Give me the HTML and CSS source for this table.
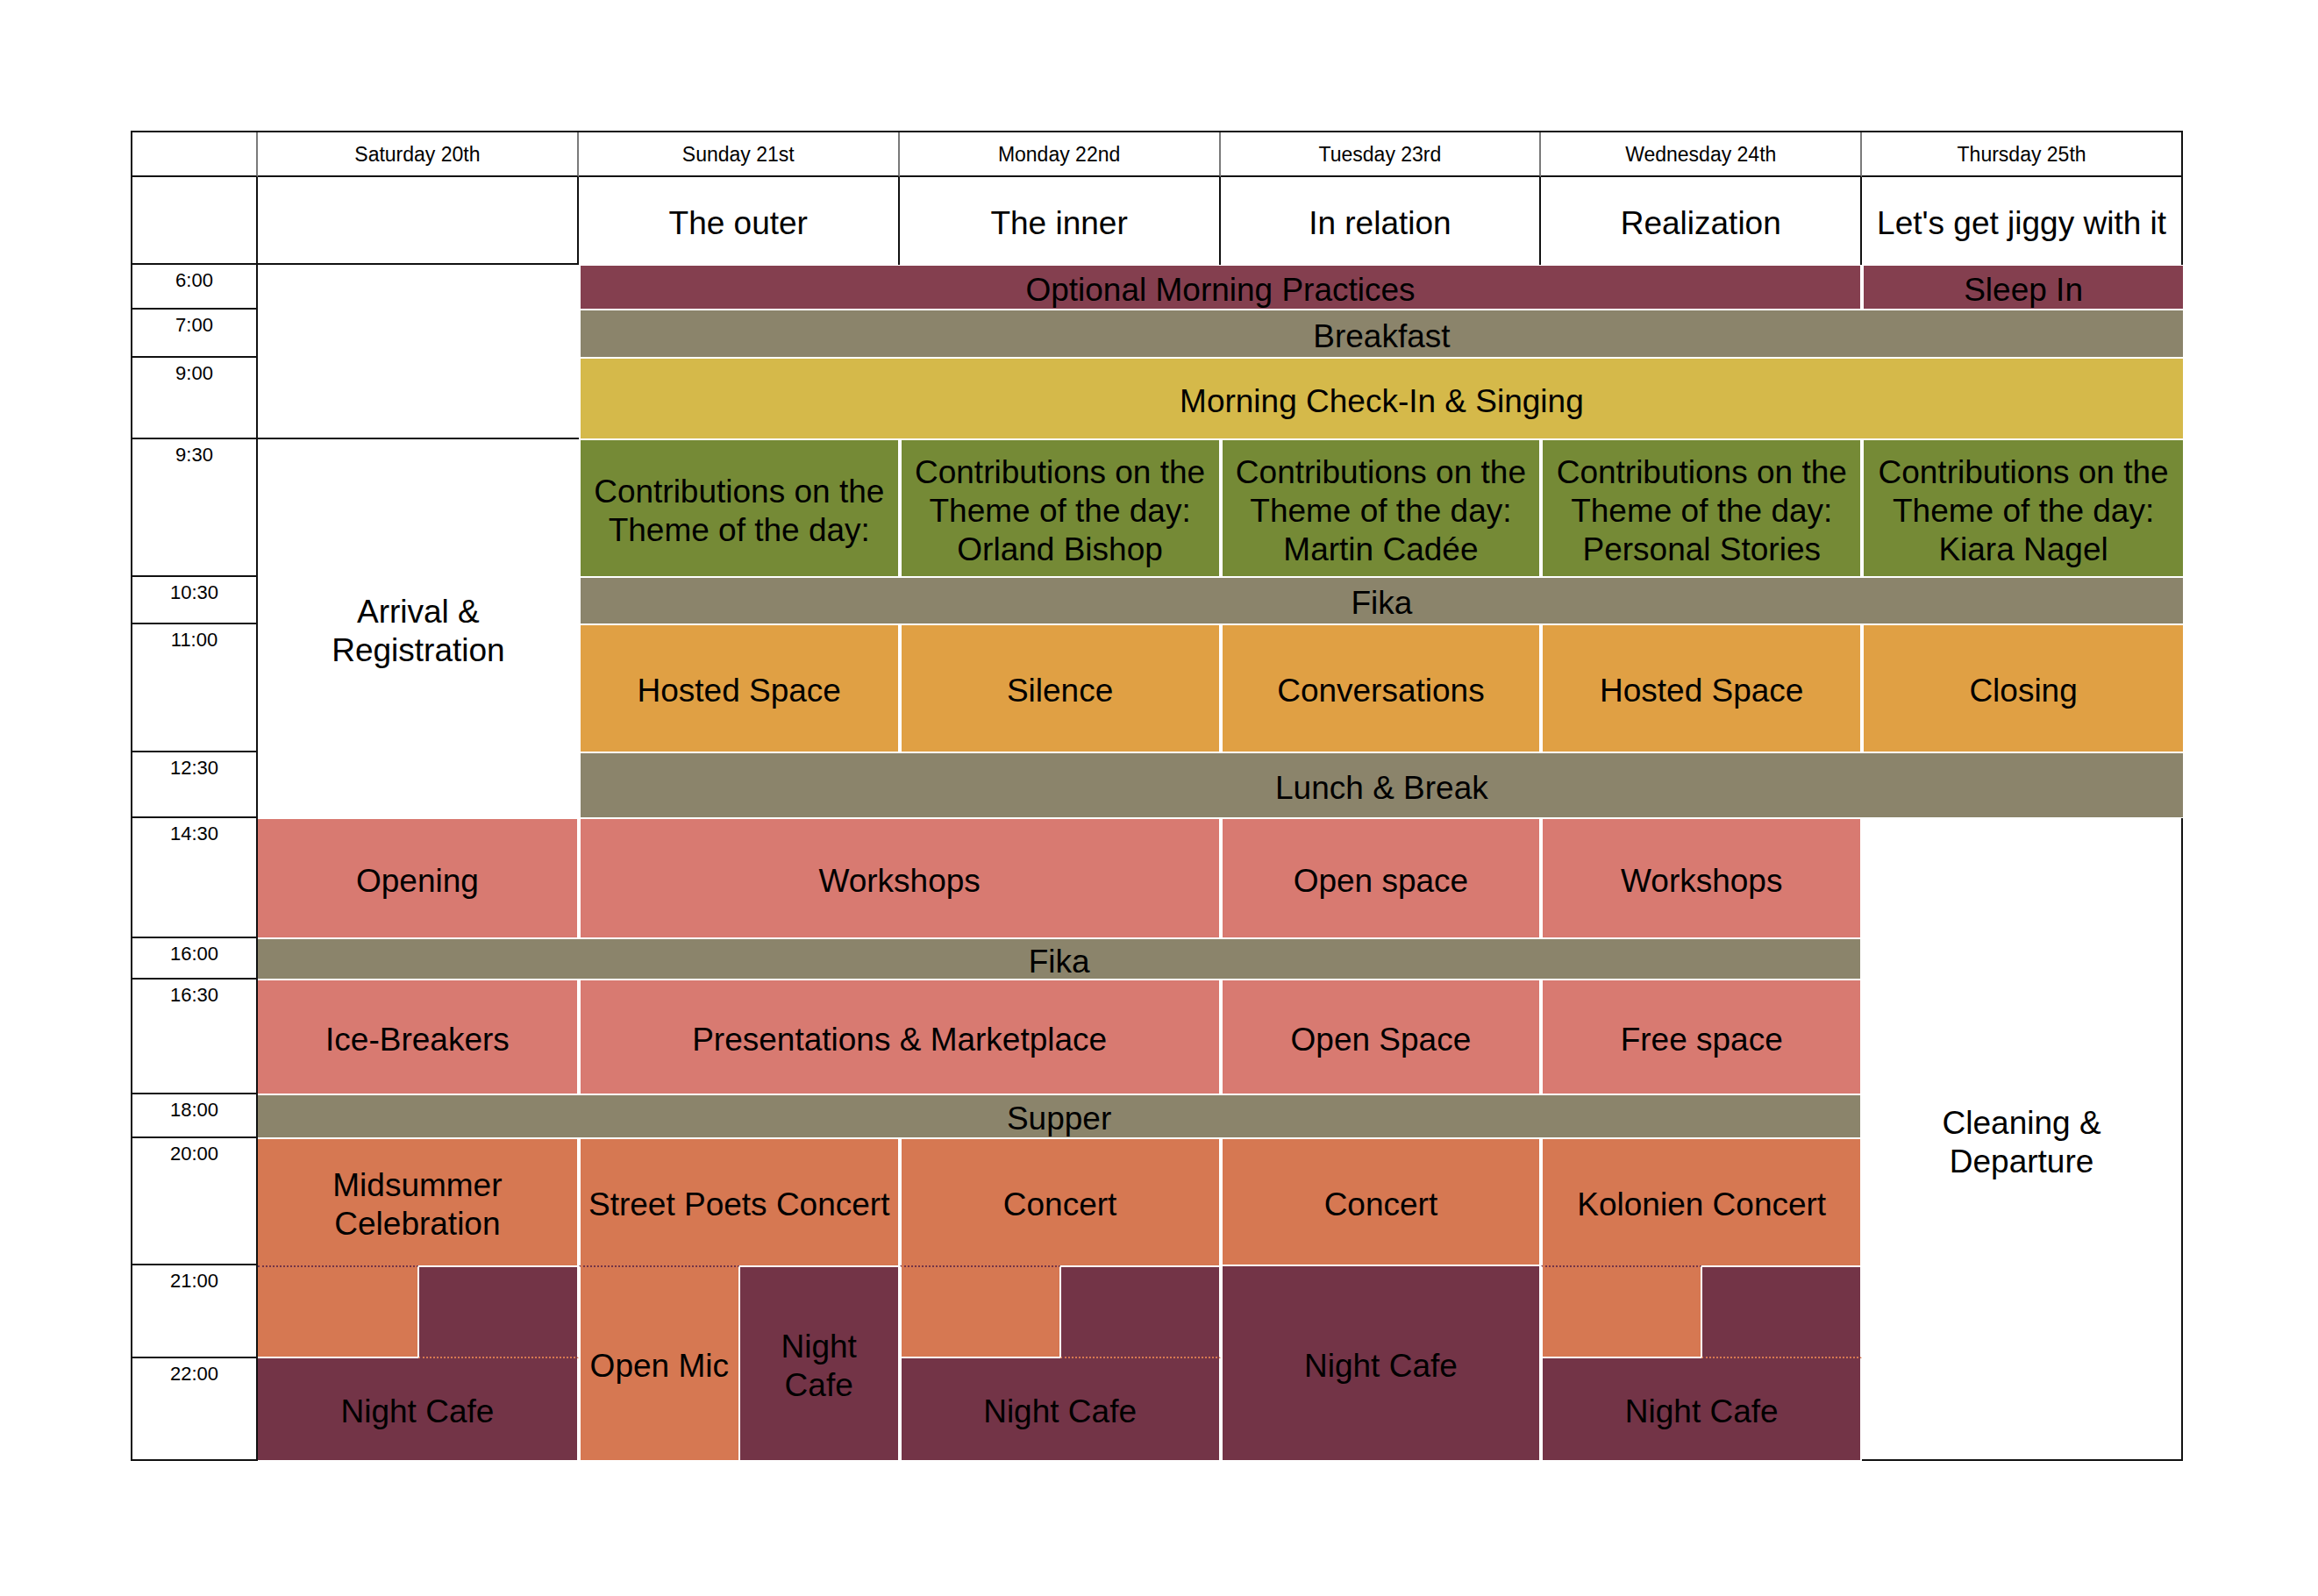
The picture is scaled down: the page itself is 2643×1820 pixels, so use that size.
FILE: index.html
```html
<!DOCTYPE html>
<html lang="en">
<head>
<meta charset="utf-8">
<title>Schedule</title>
<link rel="stylesheet" href="styles.css">
</head>
<body>
<div class="sched">
  <!-- header row: days -->
  <div class="hd-corner col-time t-day"></div>
  <div class="hd-day d-sat t-day">Saturday 20th</div>
  <div class="hd-day d-sun t-day">Sunday 21st</div>
  <div class="hd-day d-mon t-day">Monday 22nd</div>
  <div class="hd-day d-tue t-day">Tuesday 23rd</div>
  <div class="hd-day d-wed t-day">Wednesday 24th</div>
  <div class="hd-day hd-last d-thu t-day">Thursday 25th</div>

  <!-- header row: themes -->
  <div class="hd-corner2 col-time t-theme"></div>
  <div class="theme theme-sat d-sat t-theme"></div>
  <div class="theme d-sun t-theme">The outer</div>
  <div class="theme d-mon t-theme">The inner</div>
  <div class="theme d-tue t-theme">In relation</div>
  <div class="theme d-wed t-theme">Realization</div>
  <div class="theme d-thu t-theme">Let's get jiggy with it</div>

  <!-- time column -->
  <div class="time col-time t-0600">6:00</div>
  <div class="time col-time t-0700">7:00</div>
  <div class="time col-time t-0900">9:00</div>
  <div class="time col-time t-0930">9:30</div>
  <div class="time col-time t-1030">10:30</div>
  <div class="time col-time t-1100">11:00</div>
  <div class="time col-time t-1230">12:30</div>
  <div class="time col-time t-1430">14:30</div>
  <div class="time col-time t-1600">16:00</div>
  <div class="time col-time t-1630">16:30</div>
  <div class="time col-time t-1800">18:00</div>
  <div class="time col-time t-2000">20:00</div>
  <div class="time col-time t-2100">21:00</div>
  <div class="time col-time t-2200">22:00</div>

  <!-- Saturday white cells -->
  <div class="blank d-sat t-0600-0900"></div>
  <div class="plain d-sat t-0930-1230">Arrival &amp;<br>Registration</div>

  <!-- morning -->
  <div class="b c-morning d-sun-wed t-0600">Optional Morning Practices</div>
  <div class="b r0 c-morning d-thu t-0600">Sleep In</div>
  <div class="b r0 c-meal d-sun-thu t-0700">Breakfast</div>
  <div class="b r0 c-checkin d-sun-thu t-0900">Morning Check-In &amp; Singing</div>

  <div class="b c-contrib d-sun t-0930">Contributions on the<br>Theme of the day:</div>
  <div class="b c-contrib d-mon t-0930">Contributions on the<br>Theme of the day:<br>Orland Bishop</div>
  <div class="b c-contrib d-tue t-0930">Contributions on the<br>Theme of the day:<br>Martin Cadée</div>
  <div class="b c-contrib d-wed t-0930">Contributions on the<br>Theme of the day:<br>Personal Stories</div>
  <div class="b r0 c-contrib d-thu t-0930">Contributions on the<br>Theme of the day:<br>Kiara Nagel</div>

  <div class="b r0 c-meal d-sun-thu t-1030">Fika</div>

  <div class="b c-amber d-sun t-1100">Hosted Space</div>
  <div class="b c-amber d-mon t-1100">Silence</div>
  <div class="b c-amber d-tue t-1100">Conversations</div>
  <div class="b c-amber d-wed t-1100">Hosted Space</div>
  <div class="b r0 c-amber d-thu t-1100">Closing</div>

  <div class="b r0 c-meal d-sun-thu t-1230">Lunch &amp; Break</div>

  <!-- afternoon -->
  <div class="b l0 c-pink d-sat t-1430">Opening</div>
  <div class="b c-pink d-sun-mon t-1430">Workshops</div>
  <div class="b c-pink d-tue t-1430">Open space</div>
  <div class="b c-pink d-wed t-1430">Workshops</div>
  <div class="cleaning d-thu t-1430-end">Cleaning &amp;<br>Departure</div>

  <div class="b l0 c-meal d-sat-wed t-1600">Fika</div>

  <div class="b l0 c-pink d-sat t-1630">Ice-Breakers</div>
  <div class="b c-pink d-sun-mon t-1630">Presentations &amp; Marketplace</div>
  <div class="b c-pink d-tue t-1630">Open Space</div>
  <div class="b c-pink d-wed t-1630">Free space</div>

  <div class="b l0 c-meal d-sat-wed t-1800">Supper</div>

  <!-- evening -->
  <div class="b l0 join-below c-orange d-sat t-2000">Midsummer<br>Celebration</div>
  <div class="b join-below c-orange d-sun t-2000">Street Poets Concert</div>
  <div class="b join-below c-orange d-mon t-2000">Concert</div>
  <div class="b c-orange d-tue t-2000">Concert</div>
  <div class="b join-below c-orange d-wed t-2000">Kolonien Concert</div>

  <!-- Saturday split -->
  <div class="b l0 step-left c-orange h-sat-l t-2100"></div>
  <div class="b step-right c-night h-sat-r t-2100"></div>
  <div class="b l0 step-bottom c-night d-sat t-2200">Night Cafe</div>

  <!-- Sunday split -->
  <div class="b tall-left c-orange h-sun-l t-2100-end">Open Mic</div>
  <div class="b tall-right c-night h-sun-r t-2100-end">Night<br>Cafe</div>

  <!-- Monday split -->
  <div class="b step-left c-orange h-mon-l t-2100"></div>
  <div class="b step-right c-night h-mon-r t-2100"></div>
  <div class="b step-bottom c-night d-mon t-2200">Night Cafe</div>

  <!-- Tuesday -->
  <div class="b c-night d-tue t-2100-end">Night Cafe</div>

  <!-- Wednesday split -->
  <div class="b step-left c-orange h-wed-l t-2100"></div>
  <div class="b step-right c-night h-wed-r t-2100"></div>
  <div class="b step-bottom c-night d-wed t-2200">Night Cafe</div>
</div>
</body>
</html>
```

FILE: styles.css
```css
html, body {
  margin: 0;
  padding: 0;
  background: #ffffff;
}

body {
  width: 2643px;
  min-height: 1820px;
  font-family: "Liberation Sans", Arial, Helvetica, sans-serif;
  color: #000;
}

.sched {
  box-sizing: content-box;
  margin: 149px 0 0 149px;
  width: 2338px;
  display: grid;
  grid-template-columns: 143px repeat(12, 1fr);
  grid-template-rows: 51px 100px 51px 55px 93px 157px 54px 146px 75px 137px 47px 131px 50px 145px 106px 117px;
  border-top: 2px solid #111;
  border-left: 2px solid #111;
}

.sched > div {
  box-sizing: border-box;
  min-width: 0;
}

/* ---------- columns ---------- */
.col-time { grid-column: 1 / 2; }
.d-sat { grid-column: 2 / 4; }
.d-sun { grid-column: 4 / 6; }
.d-mon { grid-column: 6 / 8; }
.d-tue { grid-column: 8 / 10; }
.d-wed { grid-column: 10 / 12; }
.d-thu { grid-column: 12 / 14; }
.d-sun-wed { grid-column: 4 / 12; }
.d-sun-thu { grid-column: 4 / 14; }
.d-sat-wed { grid-column: 2 / 12; }
.d-sun-mon { grid-column: 4 / 8; }
.h-sat-l { grid-column: 2 / 3; }
.h-sat-r { grid-column: 3 / 4; }
.h-sun-l { grid-column: 4 / 5; }
.h-sun-r { grid-column: 5 / 6; }
.h-mon-l { grid-column: 6 / 7; }
.h-mon-r { grid-column: 7 / 8; }
.h-wed-l { grid-column: 10 / 11; }
.h-wed-r { grid-column: 11 / 12; }

/* ---------- rows ---------- */
.t-day { grid-row: 1; }
.t-theme { grid-row: 2; }
.t-0600 { grid-row: 3; }
.t-0700 { grid-row: 4; }
.t-0900 { grid-row: 5; }
.t-0930 { grid-row: 6; }
.t-1030 { grid-row: 7; }
.t-1100 { grid-row: 8; }
.t-1230 { grid-row: 9; }
.t-1430 { grid-row: 10; }
.t-1600 { grid-row: 11; }
.t-1630 { grid-row: 12; }
.t-1800 { grid-row: 13; }
.t-2000 { grid-row: 14; }
.t-2100 { grid-row: 15; }
.t-2200 { grid-row: 16; }
.t-0600-0900 { grid-row: 3 / 6; }
.t-0930-1230 { grid-row: 6 / 10; }
.t-1430-end { grid-row: 10 / 17; }
.t-2100-end { grid-row: 15 / 17; }

/* ---------- header ---------- */
.hd-corner {
  border-right: 2px solid #7a7a7a;
  border-bottom: 2px solid #111;
}

.hd-day {
  display: flex;
  align-items: center;
  justify-content: center;
  font-size: 23px;
  border-right: 2px solid #7a7a7a;
  border-bottom: 2px solid #111;
  padding-top: 1px;
}

.hd-last {
  border-right-color: #111;
}

.hd-corner2 {
  border-right: 2px solid #111;
  border-bottom: 2px solid #111;
}

.theme {
  display: flex;
  align-items: center;
  justify-content: center;
  font-size: 37px;
  white-space: nowrap;
  border-right: 2px solid #111;
  padding-top: 6px;
}

.theme-sat {
  border-bottom: 2px solid #111;
}

/* ---------- time column ---------- */
.time {
  text-align: center;
  font-size: 22px;
  line-height: 26px;
  padding-top: 5px;
  border-right: 2px solid #111;
  border-bottom: 2px solid #111;
}

/* ---------- white cells ---------- */
.blank {
  border-bottom: 2px solid #111;
}

.plain,
.cleaning {
  display: flex;
  align-items: center;
  justify-content: center;
  text-align: center;
  font-size: 37px;
  line-height: 44px;
  padding-top: 6px;
}

.cleaning {
  background: #fff;
  border-right: 2px solid #111;
  border-bottom: 2px solid #111;
  padding-top: 8px;
}

/* ---------- coloured blocks ---------- */
.b {
  display: flex;
  align-items: center;
  justify-content: center;
  text-align: center;
  font-size: 37px;
  line-height: 44px;
  white-space: nowrap;
  border-style: solid;
  border-color: #fff;
  border-width: 1px 2px;
  padding-top: 6px;
}

.l0 { border-left-width: 0; }
.r0 { border-right-width: 0; }

.c-morning { background: #843f4f; }
.c-meal { background: #8b846b; }
.c-checkin { background: #d5b94a; }
.c-contrib { background: #758a36; }
.c-amber { background: #e0a044; }
.c-pink { background: #d87a71; }
.c-orange { background: #d67852; }
.c-night { background: #733447; }

/* evening joins */
.join-below {
  border-bottom-width: 0;
}

.step-left {
  border-top: 2px dotted #733447;
  border-bottom: 2px solid #fff;
  border-right-width: 1px;
}

.step-right {
  border-top: 2px solid #fff;
  border-bottom: 2px dotted #d67852;
  border-left-width: 1px;
}

.step-bottom {
  border-top-width: 0;
}

.tall-left {
  border-top: 2px dotted #733447;
  border-right-width: 1px;
}

.tall-right {
  border-top: 2px solid #fff;
  border-left-width: 1px;
}
```
